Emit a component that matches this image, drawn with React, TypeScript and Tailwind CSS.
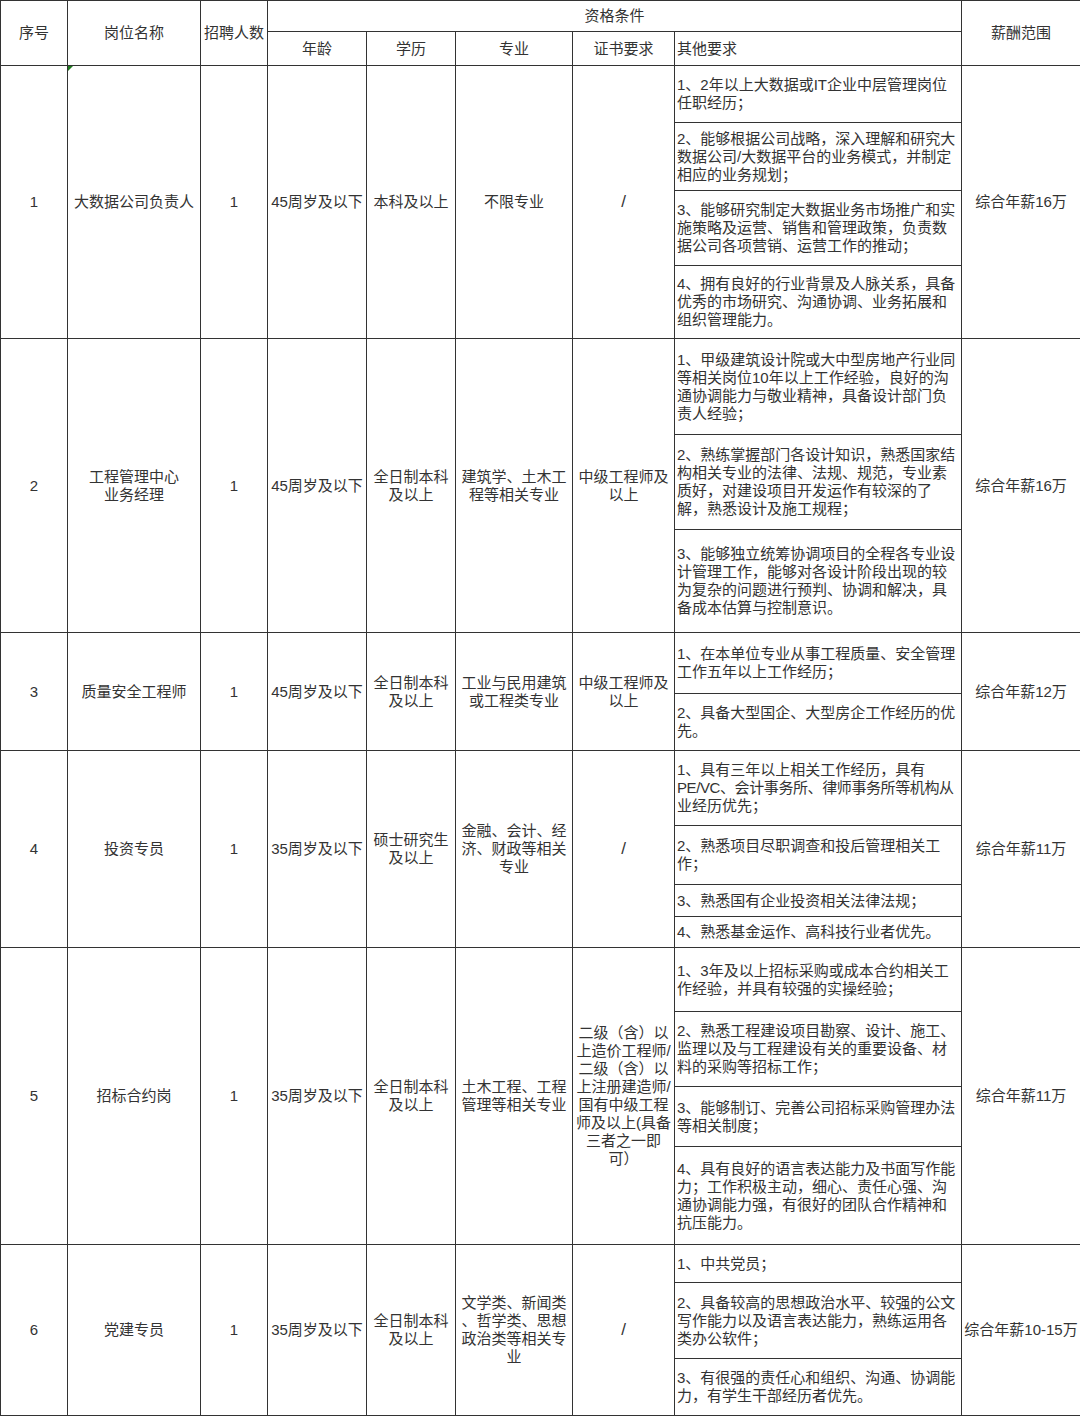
import React from 'react';

interface SubReq {
  h: number;
  lines: string[];
}

interface Job {
  no: string;
  name: string[];
  count: string;
  age: string;
  edu: string[];
  major: string[];
  cert: string[];
  others: SubReq[];
  salary: string;
  marker?: boolean;
}

const jobs: Job[] = [
  {
    no: '1',
    name: ['大数据公司负责人'],
    count: '1',
    age: '45周岁及以下',
    edu: ['本科及以上'],
    major: ['不限专业'],
    cert: ['/'],
    marker: true,
    others: [
      { h: 57, lines: ['1、2年以上大数据或IT企业中层管理岗位', '任职经历；'] },
      { h: 68, lines: ['2、能够根据公司战略，深入理解和研究大', '数据公司/大数据平台的业务模式，并制定', '相应的业务规划；'] },
      { h: 75, lines: ['3、能够研究制定大数据业务市场推广和实', '施策略及运营、销售和管理政策，负责数', '据公司各项营销、运营工作的推动；'] },
      { h: 73, lines: ['4、拥有良好的行业背景及人脉关系，具备', '优秀的市场研究、沟通协调、业务拓展和', '组织管理能力。'] },
    ],
    salary: '综合年薪16万',
  },
  {
    no: '2',
    name: ['工程管理中心', '业务经理'],
    count: '1',
    age: '45周岁及以下',
    edu: ['全日制本科', '及以上'],
    major: ['建筑学、土木工', '程等相关专业'],
    cert: ['中级工程师及', '以上'],
    others: [
      { h: 96, lines: ['1、甲级建筑设计院或大中型房地产行业同', '等相关岗位10年以上工作经验，良好的沟', '通协调能力与敬业精神，具备设计部门负', '责人经验；'] },
      { h: 95, lines: ['2、熟练掌握部门各设计知识，熟悉国家结', '构相关专业的法律、法规、规范，专业素', '质好，对建设项目开发运作有较深的了', '解，熟悉设计及施工规程；'] },
      { h: 103, lines: ['3、能够独立统筹协调项目的全程各专业设', '计管理工作，能够对各设计阶段出现的较', '为复杂的问题进行预判、协调和解决，具', '备成本估算与控制意识。'] },
    ],
    salary: '综合年薪16万',
  },
  {
    no: '3',
    name: ['质量安全工程师'],
    count: '1',
    age: '45周岁及以下',
    edu: ['全日制本科', '及以上'],
    major: ['工业与民用建筑', '或工程类专业'],
    cert: ['中级工程师及', '以上'],
    others: [
      { h: 61, lines: ['1、在本单位专业从事工程质量、安全管理', '工作五年以上工作经历；'] },
      { h: 57, lines: ['2、具备大型国企、大型房企工作经历的优', '先。'] },
    ],
    salary: '综合年薪12万',
  },
  {
    no: '4',
    name: ['投资专员'],
    count: '1',
    age: '35周岁及以下',
    edu: ['硕士研究生', '及以上'],
    major: ['金融、会计、经', '济、财政等相关', '专业'],
    cert: ['/'],
    others: [
      { h: 75, lines: ['1、具有三年以上相关工作经历，具有', 'PE/VC、会计事务所、律师事务所等机构从', '业经历优先；'] },
      { h: 59, lines: ['2、熟悉项目尽职调查和投后管理相关工', '作；'] },
      { h: 32, lines: ['3、熟悉国有企业投资相关法律法规；'] },
      { h: 31, lines: ['4、熟悉基金运作、高科技行业者优先。'] },
    ],
    salary: '综合年薪11万',
  },
  {
    no: '5',
    name: ['招标合约岗'],
    count: '1',
    age: '35周岁及以下',
    edu: ['全日制本科', '及以上'],
    major: ['土木工程、工程', '管理等相关专业'],
    cert: ['二级（含）以', '上造价工程师/', '二级（含）以', '上注册建造师/', '国有中级工程', '师及以上(具备', '三者之一即', '可）'],
    others: [
      { h: 64, lines: ['1、3年及以上招标采购或成本合约相关工', '作经验，并具有较强的实操经验；'] },
      { h: 75, lines: ['2、熟悉工程建设项目勘察、设计、施工、', '监理以及与工程建设有关的重要设备、材', '料的采购等招标工作；'] },
      { h: 60, lines: ['3、能够制订、完善公司招标采购管理办法', '等相关制度；'] },
      { h: 98, lines: ['4、具有良好的语言表达能力及书面写作能', '力；工作积极主动，细心、责任心强、沟', '通协调能力强，有很好的团队合作精神和', '抗压能力。'] },
    ],
    salary: '综合年薪11万',
  },
  {
    no: '6',
    name: ['党建专员'],
    count: '1',
    age: '35周岁及以下',
    edu: ['全日制本科', '及以上'],
    major: ['文学类、新闻类', '、哲学类、思想', '政治类等相关专', '业'],
    cert: ['/'],
    others: [
      { h: 38, lines: ['1、中共党员；'] },
      { h: 76, lines: ['2、具备较高的思想政治水平、较强的公文', '写作能力以及语言表达能力，熟练运用各', '类办公软件；'] },
      { h: 57, lines: ['3、有很强的责任心和组织、沟通、协调能', '力，有学生干部经历者优先。'] },
    ],
    salary: '综合年薪10-15万',
  },
];

const cell = 'border border-[#333] p-0 align-middle text-center';

function Lines({ lines }: { lines: string[] }) {
  return (
    <>
      {lines.map((l, i) => (
        <div key={i} className={l.startsWith('PE/VC') ? 'whitespace-nowrap tracking-[-0.4px]' : 'whitespace-nowrap'}>
          {l}
        </div>
      ))}
    </>
  );
}

function JobRows({ job }: { job: Job }) {
  const span = job.others.length;
  return (
    <>
      {job.others.map((o, i) => (
        <tr key={i} style={{ height: o.h }}>
          {i === 0 && (
            <>
              <td rowSpan={span} className={cell}>{job.no}</td>
              <td rowSpan={span} className={`${cell} relative`}>
                {job.marker && (
                  <span className="absolute left-0 top-0 w-0 h-0 border-t-[5px] border-r-[5px] border-t-[#1e7a1e] border-r-transparent" />
                )}
                <Lines lines={job.name} />
              </td>
              <td rowSpan={span} className={cell}>{job.count}</td>
              <td rowSpan={span} className={cell}>{job.age}</td>
              <td rowSpan={span} className={cell}><Lines lines={job.edu} /></td>
              <td rowSpan={span} className={cell}><Lines lines={job.major} /></td>
              <td rowSpan={span} className={cell}>
                {job.cert[0] === '/' ? <span className="text-[17px]">/</span> : <Lines lines={job.cert} />}
              </td>
            </>
          )}
          <td className={`${cell} text-left pl-[2px]`}>
            <Lines lines={o.lines} />
          </td>
          {i === 0 && (
            <td rowSpan={span} className={cell}>{job.salary}</td>
          )}
        </tr>
      ))}
    </>
  );
}

export default function App() {
  return (
    <div className="w-[1080px] h-[1416px] bg-white text-[#333] text-[15px] leading-[18px] font-['Liberation_Sans','Noto_Sans_CJK_SC',sans-serif]">
      <table className="w-[1080px] border-collapse table-fixed">
        <colgroup>
          <col className="w-[67px]" />
          <col className="w-[133px]" />
          <col className="w-[67px]" />
          <col className="w-[99px]" />
          <col className="w-[89px]" />
          <col className="w-[117px]" />
          <col className="w-[102px]" />
          <col className="w-[287px]" />
          <col className="w-[119px]" />
        </colgroup>
        <thead>
          <tr className="h-[31px]">
            <th rowSpan={2} className={`${cell} font-normal`}>序号</th>
            <th rowSpan={2} className={`${cell} font-normal`}>岗位名称</th>
            <th rowSpan={2} className={`${cell} font-normal whitespace-nowrap`}>招聘人数</th>
            <th colSpan={5} className={`${cell} font-normal`}>资格条件</th>
            <th rowSpan={2} className={`${cell} font-normal`}>薪酬范围</th>
          </tr>
          <tr className="h-[34px]">
            <th className={`${cell} font-normal`}>年龄</th>
            <th className={`${cell} font-normal`}>学历</th>
            <th className={`${cell} font-normal`}>专业</th>
            <th className={`${cell} font-normal`}>证书要求</th>
            <th className={`${cell} font-normal text-left pl-[2px]`}>其他要求</th>
          </tr>
        </thead>
        <tbody>
          {jobs.map((job) => (
            <JobRows key={job.no} job={job} />
          ))}
        </tbody>
      </table>
    </div>
  );
}
